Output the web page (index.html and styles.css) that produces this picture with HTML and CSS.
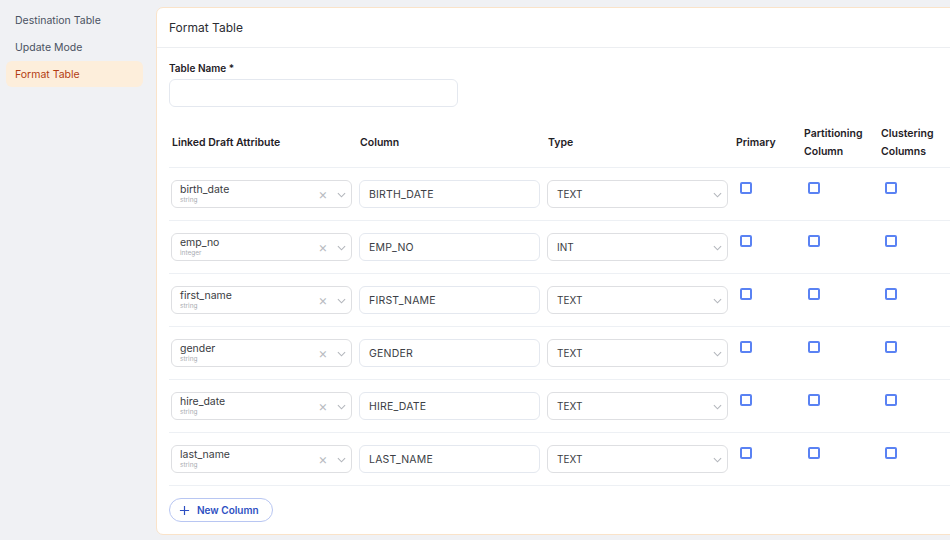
FILE: index.html
```html
<!DOCTYPE html>
<html>
<head>
<meta charset="utf-8">
<link rel="stylesheet" href="styles.css">
</head>
<body>
<div class="layout">
  <nav class="sidebar">
    <div class="nav-item">Destination Table</div>
    <div class="nav-item">Update Mode</div>
    <div class="nav-item active">Format Table</div>
  </nav>
  <section class="card">
    <header class="card-head">Format Table</header>
    <div class="card-body">
      <label class="field-label">Table Name *</label>
      <div class="text-input name-input"></div>

      <div class="grid head">
        <div class="th">Linked Draft Attribute</div>
        <div class="th">Column</div>
        <div class="th">Type</div>
        <div class="th">Primary</div>
        <div class="th">Partitioning<br>Column</div>
        <div class="th">Clustering<br>Columns</div>
      </div>

      <div class="grid row">
        <div class="select"><div class="sel-text"><span class="sel-main">birth_date</span><span class="sel-sub">string</span></div><span class="clear">×</span><svg class="chev" viewBox="0 0 10 6"><path d="M1 1l4 4 4-4"/></svg></div>
        <div class="text-input"><span>BIRTH_DATE</span></div>
        <div class="select type"><span class="type-text">TEXT</span><svg class="chev" viewBox="0 0 10 6"><path d="M1 1l4 4 4-4"/></svg></div>
        <div class="cb-cell"><span class="cb"></span></div>
        <div class="cb-cell"><span class="cb"></span></div>
        <div class="cb-cell"><span class="cb"></span></div>
      </div>

      <div class="grid row">
        <div class="select"><div class="sel-text"><span class="sel-main">emp_no</span><span class="sel-sub">integer</span></div><span class="clear">×</span><svg class="chev" viewBox="0 0 10 6"><path d="M1 1l4 4 4-4"/></svg></div>
        <div class="text-input"><span>EMP_NO</span></div>
        <div class="select type"><span class="type-text">INT</span><svg class="chev" viewBox="0 0 10 6"><path d="M1 1l4 4 4-4"/></svg></div>
        <div class="cb-cell"><span class="cb"></span></div>
        <div class="cb-cell"><span class="cb"></span></div>
        <div class="cb-cell"><span class="cb"></span></div>
      </div>

      <div class="grid row">
        <div class="select"><div class="sel-text"><span class="sel-main">first_name</span><span class="sel-sub">string</span></div><span class="clear">×</span><svg class="chev" viewBox="0 0 10 6"><path d="M1 1l4 4 4-4"/></svg></div>
        <div class="text-input"><span>FIRST_NAME</span></div>
        <div class="select type"><span class="type-text">TEXT</span><svg class="chev" viewBox="0 0 10 6"><path d="M1 1l4 4 4-4"/></svg></div>
        <div class="cb-cell"><span class="cb"></span></div>
        <div class="cb-cell"><span class="cb"></span></div>
        <div class="cb-cell"><span class="cb"></span></div>
      </div>

      <div class="grid row">
        <div class="select"><div class="sel-text"><span class="sel-main">gender</span><span class="sel-sub">string</span></div><span class="clear">×</span><svg class="chev" viewBox="0 0 10 6"><path d="M1 1l4 4 4-4"/></svg></div>
        <div class="text-input"><span>GENDER</span></div>
        <div class="select type"><span class="type-text">TEXT</span><svg class="chev" viewBox="0 0 10 6"><path d="M1 1l4 4 4-4"/></svg></div>
        <div class="cb-cell"><span class="cb"></span></div>
        <div class="cb-cell"><span class="cb"></span></div>
        <div class="cb-cell"><span class="cb"></span></div>
      </div>

      <div class="grid row">
        <div class="select"><div class="sel-text"><span class="sel-main">hire_date</span><span class="sel-sub">string</span></div><span class="clear">×</span><svg class="chev" viewBox="0 0 10 6"><path d="M1 1l4 4 4-4"/></svg></div>
        <div class="text-input"><span>HIRE_DATE</span></div>
        <div class="select type"><span class="type-text">TEXT</span><svg class="chev" viewBox="0 0 10 6"><path d="M1 1l4 4 4-4"/></svg></div>
        <div class="cb-cell"><span class="cb"></span></div>
        <div class="cb-cell"><span class="cb"></span></div>
        <div class="cb-cell"><span class="cb"></span></div>
      </div>

      <div class="grid row">
        <div class="select"><div class="sel-text"><span class="sel-main">last_name</span><span class="sel-sub">string</span></div><span class="clear">×</span><svg class="chev" viewBox="0 0 10 6"><path d="M1 1l4 4 4-4"/></svg></div>
        <div class="text-input"><span>LAST_NAME</span></div>
        <div class="select type"><span class="type-text">TEXT</span><svg class="chev" viewBox="0 0 10 6"><path d="M1 1l4 4 4-4"/></svg></div>
        <div class="cb-cell"><span class="cb"></span></div>
        <div class="cb-cell"><span class="cb"></span></div>
        <div class="cb-cell"><span class="cb"></span></div>
      </div>

      <button class="new-col"><svg viewBox="0 0 12 12"><path d="M6 1v10M1 6h10"/></svg>New Column</button>
    </div>
  </section>
</div>
</body>
</html>
```
FILE: styles.css
```css
* { box-sizing: border-box; }
html, body { margin: 0; padding: 0; }
body {
  background: #f0f1f4;
  font-family: Inter, "Noto Sans", sans-serif;
  width: 950px;
  height: 540px;
  overflow: hidden;
}
.layout {
  display: flex;
  align-items: flex-start;
}
.sidebar {
  width: 156px;
  flex: none;
  padding: 7px 13px 0 6px;
}
.nav-item {
  height: 26px;
  margin-bottom: 1px;
  padding-left: 9px;
  display: flex;
  align-items: center;
  font-size: 10.5px;
  color: #4a5262;
  border-radius: 6px;
}
.nav-item.active {
  background: #fdeedb;
  color: #b23c12;
}
.card {
  flex: none;
  width: 820px;
  height: 528px;
  margin-top: 7px;
  background: #fff;
  border: 1px solid #fae3c9;
  border-radius: 7px;
  overflow: hidden;
}
.card-head {
  height: 40px;
  padding-left: 12px;
  display: flex;
  align-items: center;
  font-size: 12px;
  color: #2b2d33;
  border-bottom: 1.5px solid #eceef1;
}
.card-body {
  padding: 12px 12px 0 12px;
}
.field-label {
  display: block;
  font-size: 10px;
  font-weight: 600;
  color: #1f2126;
  line-height: 14px;
  margin-top: 1px;
  margin-bottom: 4px;
}
.text-input {
  height: 28px;
  border: 1px solid #e4e8ef;
  border-radius: 6px;
  display: flex;
  align-items: center;
  padding-left: 9px;
  font-size: 10.5px;
  color: #3b3e45;
  letter-spacing: 0.2px;
}
.name-input {
  width: 289px;
  height: 28px;
}
.grid {
  display: grid;
  grid-template-columns: 181px 181px 181px 61px 70px 1fr;
  column-gap: 7px;
  padding-left: 2px;
  border-bottom: 1.5px solid #edf0f4;
}
.head {
  margin-top: 18px;
  padding-bottom: 6px;
  align-items: center;
}
.th {
  font-size: 10.5px;
  font-weight: 600;
  color: #1f2126;
  line-height: 18px;
  padding-left: 1px;
}
.row {
  padding-top: 12px;
  padding-bottom: 12px;
  align-items: start;
}
.select {
  height: 28px;
  border: 1px solid #dedfe2;
  border-radius: 6px;
  display: flex;
  align-items: center;
  padding-left: 8px;
  padding-right: 5px;
}
.sel-text {
  flex: 1;
  display: flex;
  flex-direction: column;
  line-height: 1;
}
.sel-main {
  font-size: 10.5px;
  color: #3a3c42;
}
.sel-sub {
  font-size: 6.5px;
  color: #a9acb2;
  margin-top: 1px;
}
.clear {
  font-size: 14px;
  color: #b9bcc2;
  width: 14px;
  text-align: center;
  margin-right: 7px;
  line-height: 1;
}
.chev {
  width: 9px;
  height: 6px;
  fill: none;
  stroke: #b3b6bc;
  stroke-width: 1.2;
  margin-top: 2px;
}
.select.type {
  padding-left: 9px;
}
.type-text {
  flex: 1;
  font-size: 10px;
  color: #3a3c42;
}
.cb-cell {
  padding-left: 5px;
  padding-top: 2px;
}
.cb {
  display: block;
  width: 12px;
  height: 12px;
  border: 2px solid #5a82f3;
  border-radius: 2px;
}
.new-col {
  margin-top: 12px;
  height: 24px;
  width: 104px;
  border: 1px solid #b8c6f2;
  border-radius: 12px;
  background: #fff;
  display: flex;
  align-items: center;
  padding: 0 0 0 9px;
  font-family: Inter, "Noto Sans", sans-serif;
  font-size: 10px;
  font-weight: 600;
  color: #2d4fc2;
}
.new-col svg {
  width: 11px;
  height: 11px;
  fill: none;
  stroke: #2d4fc2;
  stroke-width: 1.3;
  margin-right: 7px;
}
```
